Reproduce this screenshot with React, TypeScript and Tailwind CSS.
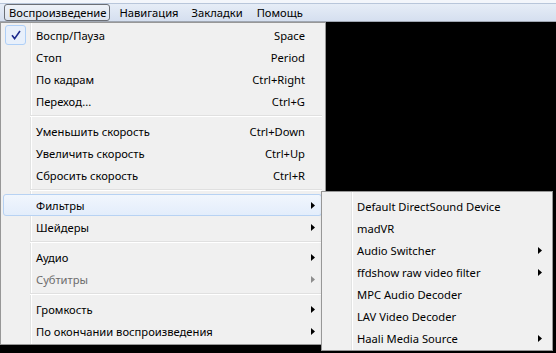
import React from 'react';

type Item =
  | { kind: 'sep' }
  | { kind: 'item'; label: string; shortcut?: string; sub?: boolean; checked?: boolean; disabled?: boolean; active?: boolean };

const mainItems: Item[] = [
  { kind: 'item', label: 'Воспр/Пауза', shortcut: 'Space', checked: true },
  { kind: 'item', label: 'Стоп', shortcut: 'Period' },
  { kind: 'item', label: 'По кадрам', shortcut: 'Ctrl+Right' },
  { kind: 'item', label: 'Переход...', shortcut: 'Ctrl+G' },
  { kind: 'sep' },
  { kind: 'item', label: 'Уменьшить скорость', shortcut: 'Ctrl+Down' },
  { kind: 'item', label: 'Увеличить скорость', shortcut: 'Ctrl+Up' },
  { kind: 'item', label: 'Сбросить скорость', shortcut: 'Ctrl+R' },
  { kind: 'sep' },
  { kind: 'item', label: 'Фильтры', sub: true, active: true },
  { kind: 'item', label: 'Шейдеры', sub: true },
  { kind: 'sep' },
  { kind: 'item', label: 'Аудио', sub: true },
  { kind: 'item', label: 'Субтитры', sub: true, disabled: true },
  { kind: 'sep' },
  { kind: 'item', label: 'Громкость', sub: true },
  { kind: 'item', label: 'По окончании воспроизведения', sub: true },
];

const filterItems: Item[] = [
  { kind: 'item', label: 'Default DirectSound Device' },
  { kind: 'item', label: 'madVR' },
  { kind: 'item', label: 'Audio Switcher', sub: true },
  { kind: 'item', label: 'ffdshow raw video filter', sub: true },
  { kind: 'item', label: 'MPC Audio Decoder' },
  { kind: 'item', label: 'LAV Video Decoder' },
  { kind: 'item', label: 'Haali Media Source', sub: true },
];

const Arrow = ({ disabled }: { disabled?: boolean }) => (
  <svg width="4" height="7" viewBox="0 0 4 7" className="shrink-0">
    <path d="M0 0 L4 3.5 L0 7 Z" fill={disabled ? '#8d8d8d' : '#000'} />
  </svg>
);

const MenuRows = ({ items }: { items: Item[] }) => (
  <>
    {items.map((it, i) => {
      if (it.kind === 'sep') {
        return (
          <div key={i} className="h-[8px] flex flex-col justify-center pl-[27px]">
            <div className="h-px bg-[#e0e0e0]" />
            <div className="h-px bg-white" />
          </div>
        );
      }
      return (
        <div
          key={i}
          className={`relative h-[22px] flex items-center pl-[32px] pr-[6px] pt-[1px] rounded-[3px] border ${
            it.active
              ? 'border-[#b7d2f3] bg-[linear-gradient(to_bottom,#f1f6fd,#e3edfb)]'
              : 'border-transparent'
          } ${it.disabled ? 'text-[#6d6d6d]' : 'text-black'}`}
        >
          {it.checked && (
            <div className="absolute left-[1px] top-[0px] w-[21px] h-[20px] rounded-[3px] border border-[#aecff7] bg-[#e8f0fb] flex items-center justify-center">
              <svg width="10" height="10" viewBox="0 0 10 10">
                <path d="M1 5.2 L3.6 8.6 L9 1" fill="none" stroke="#1d2a8c" strokeWidth="1.6" />
              </svg>
            </div>
          )}
          <span className="flex-1 whitespace-nowrap">{it.label}</span>
          {it.shortcut && <span className="whitespace-nowrap mr-[10px]">{it.shortcut}</span>}
          {it.sub && <Arrow disabled={it.disabled} />}
        </div>
      );
    })}
  </>
);

export default function App() {
  return (
    <div
      className="w-[556px] h-[353px] bg-black overflow-hidden text-[11.2px] leading-none"
      style={{ fontFamily: '"Noto Sans", "Open Sans", sans-serif' }}
    >
      {/* Menu bar */}
      <div className="h-[22px] bg-[linear-gradient(to_bottom,#f3f6fb_0px,#f3f6fb_3px,#b8c6da_3px,#b8c6da_4px,#e6edf7_4px,#d5dfef_21px,#a0a7b2_21px)] flex items-end pl-[4px] pb-[1px]">
        <div className="h-[17px] pl-[4px] pr-[3px] flex items-center rounded-[3px] border border-[#6b6f76] bg-[linear-gradient(to_bottom,#eef2f8,#dde4ee)]">
          Воспроизведение
        </div>
        <div className="h-[17px] pl-[9px] pr-[6px] flex items-center">Навигация</div>
        <div className="h-[17px] px-[7px] flex items-center">Закладки</div>
        <div className="h-[17px] px-[7px] flex items-center">Помощь</div>
      </div>

      <div className="relative">
        {/* Main dropdown */}
        <div className="w-[326px] h-[323px] border border-[#979797] px-[2px] pr-[3px] pt-[1px] bg-[#f0f0f0] bg-[linear-gradient(to_right,#f0f0f0_29px,#e2e3e3_29px,#e2e3e3_30px,#ffffff_30px,#ffffff_31px,#f0f0f0_31px)]">
          <MenuRows items={mainItems} />
        </div>

        {/* Filters submenu */}
        <div className="absolute left-[321px] top-[169px] w-[232px] h-[160px] border border-[#979797] px-[2px] pr-[3px] pt-[3px] bg-[#f0f0f0] bg-[linear-gradient(to_right,#f0f0f0_29px,#e2e3e3_29px,#e2e3e3_30px,#ffffff_30px,#ffffff_31px,#f0f0f0_31px)] shadow-[2px_2px_3px_rgba(0,0,0,0.4)]">
          <MenuRows items={filterItems} />
        </div>
      </div>
    </div>
  );
}
